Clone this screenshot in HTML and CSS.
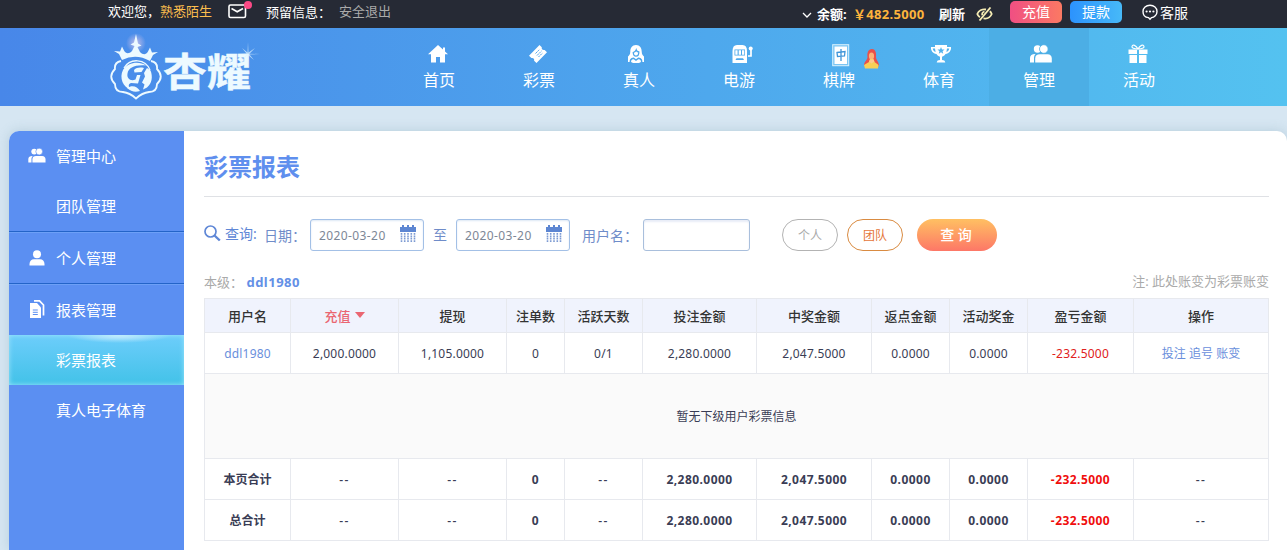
FILE: index.html
```html
<!DOCTYPE html>
<html lang="zh-CN">
<head>
  <meta charset="UTF-8">
  <title>彩票报表</title>
  <link rel="stylesheet" href="styles.css">
</head>
<body>
  <!-- 顶部信息栏 -->
  <div class="topbar">
    <div class="top-left">
      <span>欢迎您，</span><span class="user-name">熟悉陌生</span>
      <a class="mail">
        <svg width="19" height="16" viewBox="0 0 19 16" fill="none" stroke="#fff" stroke-width="1.6"><rect x="1" y="2" width="16.5" height="12.5" rx="1.5"/><path d="M3.500 5.500l5.700 3.300L15 5.500"/></svg>
        <i class="dot"></i>
      </a>
      <span class="keep-info">预留信息<i class="colon">：</i></span>
      <a class="logout">安全退出</a>
    </div>
    <div class="top-right">
      <svg class="chevron" width="10" height="8" viewBox="0 0 10 8" fill="none" stroke="#fff" stroke-width="1.3"><path d="M1 2l4 4 4-4"/></svg>
      <b class="balance-label">余额:</b>
      <b class="balance">￥482.5000</b>
      <b class="refresh">刷新</b>
      <svg class="eye" width="17" height="14" viewBox="0 0 17 14" fill="none" stroke="#f5ecb4" stroke-width="1.8"><path d="M10 2.500C6 1.800 2.500 4 1.300 7c.5 1.400 1.400 2.500 2.600 3.300M7.500 11.400c4 .6 7-1.400 8.200-4.400-.4-1.100-1-2-1.900-2.700"/><path d="M14.500.5L3.500 13.500"/><path d="M8.500 4.500c-2 .5-2.700 2-2.200 3.700"/></svg>
      <a class="btn-top recharge">充值</a>
      <a class="btn-top withdraw">提款</a>
      <a class="service">
        <svg width="16" height="17" viewBox="0 0 16 17"><path d="M8 1.200c4 0 7 2.600 7 6.200s-2.800 6-5.500 6.200L8 15.300l-1.500-1.700C3.500 13.300 1 11 1 7.400S4 1.200 8 1.200z" fill="none" stroke="#fff" stroke-width="1.400"/><circle cx="4.600" cy="7.500" r="1.100" fill="#fff"/><circle cx="8" cy="7.500" r="1.100" fill="#fff"/><circle cx="11.400" cy="7.500" r="1.100" fill="#fff"/></svg>
        <span>客服</span>
      </a>
    </div>
  </div>

  <!-- 导航 -->
  <div class="header">
    <div class="logo">
      <svg class="emblem" width="54" height="70" viewBox="0 0 54 70">
        <defs><radialGradient id="glow"><stop offset="0" stop-color="#f3cfe8" stop-opacity=".7"/><stop offset="1" stop-color="#f3cfe8" stop-opacity="0"/></radialGradient></defs>
        <circle cx="27" cy="10" r="10" fill="url(#glow)"/>
        <path d="M13 27l-3-6-5-3 6 .5 2-5 2 4c2 3.500 5 3.500 8 .5l2.500-5-4-1.500 3.500-2L27 1l2 9.500 3.500 2-4 1.500 2.500 5c3 3 6 3 8-.5l2-4 2 5 6-.5-5 3-3 6Q27 20 13 27z" fill="#edfaff"/>
        <path d="M12 28c-5 1-6.500 4-6 8-5 5-5 10 0 15 0 5 3 8 8 8 4 .5 8 2 13 6.500C32 61 36 59.500 40 59c5 0 8-3 8-8 5-5 5-10 0-15 .5-4-1-7-6-8" fill="none" stroke="#edfaff" stroke-width="1.800"/>
        <path d="M41 37A14.500 14.500 0 0 0 15 35" fill="none" stroke="#edfaff" stroke-width="1.400"/>
        <path d="M37 32.500C31 28 19 28.500 14 37c-4 8 0 17 8 20-3-3.500-3-6 0-7l7 .5 2.500-8.500-3.500 0-1.500 4.500c-5 2-9-1-8-6C19.500 34.500 26 31.500 37 32.500z" fill="#edfaff"/>
        <path d="M25 37c2.500-2.500 6-3 10-2l-2.500 4-7 .5z" fill="#edfaff"/>
        <path d="M38 35l3.500 2.500c2.500 6 1.500 13-3.500 17l-4 2 1.500-5-2.500-2 3-6-1-3.500z" fill="#edfaff"/>
        <path d="M18 55c5-3 10-2 13 3-5 1.500-9 .5-13-3z" fill="#edfaff"/>
      </svg>
      <span class="logo-text">杏耀</span>
      <svg class="spark" width="24" height="24" viewBox="0 0 24 24"><path d="M12 0l.5 10.500L19 6l-5.500 5.700L24 12l-10.500.5L18 18l-5.500-4.500L12 24l-.6-10.500L6 18l4.500-5.500L0 12l10.500-.6L6 6l5.500 4.500z" fill="#dff3ff" opacity=".7"/></svg>
    </div>
    <div class="nav">
      <a class="nav-item">
        <svg width="20" height="20" viewBox="0 0 20 20"><path d="M10 1L0 10.300h3V18.500h5v-5.500h4v5.500h5v-8.200h3l-3-2.800V3.500h-2v2z" fill="#fff"/></svg>
        <span>首页</span>
      </a>
      <a class="nav-item">
        <svg width="20" height="20" viewBox="0 0 20 20"><path d="M11.500 1l2.300 2.300c-.5 1.500.8 3.200 2.800 2.700l2.400 2.200L8.500 19l-2.400-2.300c.5-1.800-.8-3-2.700-2.600L1 11.800z" fill="#fff"/><path d="M7.500 9.500l4-4M9 11.500l4.500-4.500M10.500 13l4-4" stroke="#4ba0ea" stroke-width="1" stroke-dasharray="2 .7"/></svg>
        <span>彩票</span>
      </a>
      <a class="nav-item girl">
        <svg width="20" height="20" viewBox="0 0 20 20"><path d="M10 1c-4 0-5.700 3-5.700 6.500 0 3-1.300 4-2.300 5v5.500h3l2 1h6l2-1h3v-5.500c-1-1-2.300-2-2.300-5C15.700 4 14 1 10 1z" fill="#fff"/><path d="M7.300 8.500c0 2.500 1.200 3.700 2.700 3.700s2.800-1.500 2.800-4.200c-1.800-.3-2.300-1-2.600-2-.5 1.200-1.500 2-2.900 2.500z" fill="#fff" stroke="#4ba6eb" stroke-width="1.300"/><path d="M4.500 18.500c-.7-2 .5-4 3-4.300L10 16l2.500-1.800c2.500.3 3.700 2.300 3 4.300" fill="none" stroke="#4ba6eb" stroke-width="1.500"/></svg>
        <span>真人</span>
      </a>
      <a class="nav-item slot">
        <svg width="22" height="20" viewBox="0 0 22 20"><path d="M1.500 7C1.500 3 3 1 6 1h5.500c3 0 4.500 2 4.500 6v12H1.500z" fill="#fff"/><rect x="3.500" y="5.500" width="10.500" height="6" fill="#4ca9ec"/><path d="M4.300 6.300h2.300v4.400H4.300zM7.700 6.300H10v4.400H7.700zM11 6.300h2.300v4.400H11z" fill="#fff"/><path d="M4.500 16l1-1.800h6.500l1 1.800z" fill="#4ca9ec"/><path d="M17 12h3V5" fill="none" stroke="#fff" stroke-width="1.700"/><circle cx="19.700" cy="4.500" r="2" fill="#fff"/></svg>
        <span>电游</span>
      </a>
      <a class="nav-item chess">
        <svg width="18" height="23" viewBox="0 0 18 23"><rect x=".7" y=".7" width="16" height="21" fill="#7bc5f3" stroke="#d9f2fd" stroke-width="1"/><rect x="2.500" y="2.500" width="12.500" height="17.500" fill="#fff"/><path d="M5 8.500l8-1-.5 4.500-7 .5zM9 5v12" fill="none" stroke="#3f95d8" stroke-width="1.300"/></svg>
        <span>棋牌</span>
        <svg class="lady" width="17" height="20" viewBox="0 0 17 20"><path d="M9 0C5 0 4 4 4.500 8c0 3-3 4-3.500 8l2 2h12l1-2c-.5-4-3-5-3-8 .5-5-1-8-4-8z" fill="#ea5049"/><ellipse cx="8.500" cy="7" rx="2.600" ry="3.500" fill="#fdb277"/><path d="M7 10h3.500l1 3 4 3-.5 3.500H2L1 16l5-3z" fill="#f8cf55"/><path d="M6 12.500l2.500 2 3-2-1-2H7z" fill="#ffc98c"/></svg>
      </a>
      <a class="nav-item cup">
        <svg width="22" height="20" viewBox="0 0 22 20"><path d="M5 1h12v2h4c.5 3.500-2 6.500-5.500 7-.8 1.500-2 2.300-3.500 2.700V16c2 0 3 .8 3.300 2.500H6.700C7 16.800 8 16 10 16v-3.300C8.500 12.300 7.300 11.500 6.500 10 3 9.500.5 6.500 1 3h4z" fill="#fff"/><path d="M2.700 4.500H5l.6 3.500C4 7.500 3 6.300 2.700 4.500zM19.300 4.500H17l-.6 3.500c1.600-.5 2.600-1.700 2.900-3.500z" fill="#51b2ed"/><path d="M11 3l1 2.400 2.500.2-1.900 1.600.6 2.500L11 8.300 8.800 9.700l.6-2.500-1.900-1.600 2.500-.2z" fill="#51b2ed"/></svg>
        <span>体育</span>
      </a>
      <a class="nav-item active">
        <svg width="22" height="20" viewBox="0 0 22 20" fill="#fff"><circle cx="7.500" cy="5" r="3.700"/><path d="M0 18.500V14c0-2.500 2-4 5-4h.6C4.500 11 4 12.500 4 14v4.500z"/><circle cx="13.800" cy="5" r="4.300" stroke="#4caee5" stroke-width=".8"/><path d="M5.200 18.500V14.500c0-3 1.800-4.300 4.500-4.300h7.800c2.800 0 4.300 1.800 4.300 4.300v4z"/></svg>
        <span>管理</span>
      </a>
      <a class="nav-item">
        <svg width="20" height="20" viewBox="0 0 20 20"><path d="M.5 5.500H9v4.500H.5zM11 5.500h8.500V10H11zM1.500 11H9v8H1.500zM11 11h7.500v8H11z" fill="#fff"/><path d="M10 5C8 1 4.500 0 4 2.500 3.800 4 6 5 10 5c4 0 6.200-1 6-2.500C15.500 0 12 1 10 5z" fill="none" stroke="#fff" stroke-width="1.200"/></svg>
        <span>活动</span>
      </a>
    </div>
  </div>

  <div class="main">
    <!-- 左侧菜单 -->
    <div class="sidebar">
      <a class="menu-title">
        <svg width="18" height="15" viewBox="0 0 22 19" fill="#fff"><circle cx="7.500" cy="4.500" r="3.700"/><path d="M0 18.500V14c0-2.500 2-4 5-4h.6C4.500 11 4 12.500 4 14v4.500z"/><circle cx="13.800" cy="4.500" r="4.300" stroke="#5b8ff2" stroke-width=".8"/><path d="M5.200 18.500V14.500c0-3 1.800-4.300 4.500-4.300h7.800c2.800 0 4.300 1.800 4.300 4.300v4z"/></svg>
        管理中心
      </a>
      <a class="menu-sub">团队管理</a>
      <a class="menu-title line">
        <svg width="16" height="16" viewBox="0 0 16 16" fill="#fff"><circle cx="8" cy="4.200" r="4"/><path d="M.5 15.500V14c0-3 2-4.700 4.500-4.700h6c2.500 0 4.500 1.700 4.500 4.700v1.500z"/></svg>
        个人管理
      </a>
      <a class="menu-title line">
        <svg width="16" height="19" viewBox="0 0 16 19"><path d="M5 .8h5.500L14.500 5v10.500" fill="none" stroke="#fff" stroke-width="1.700"/><path d="M1 3h7l4 4.500V18H1z" fill="#fff"/><path d="M3.800 10h5M3.800 12.300h5M3.800 14.500h5" stroke="#5b8ff2" stroke-width="1"/></svg>
        报表管理
      </a>
      <a class="menu-sub current">彩票报表</a>
      <a class="menu-sub">真人电子体育</a>
    </div>

    <div class="content">
      <h1>彩票报表</h1>
      <div class="search">
        <svg class="glass" width="17" height="17" viewBox="0 0 17 17" fill="none" stroke="#5f87d6"><circle cx="6.500" cy="6.500" r="5.500" stroke-width="1.700"/><path d="M10.500 10.500l5.300 5" stroke-width="2.400"/></svg>
        <span class="search-label">查询:</span>
        <span class="date-label">日期<i class="colon">：</i></span>
        <div class="date-box">2020-03-20
          <svg width="16" height="18" viewBox="0 0 16 18"><path d="M0 2h2V0h2v2h3V0h2v2h3V0h2v2h2v5H0z" fill="#5d86d2"/><path d="M1.500 8v9M4.700 8v9M8 8v9M11.300 8v9M14.500 8v9" stroke="#7d9bd3" stroke-width="1.600" stroke-dasharray="1.800 .6"/></svg>
        </div>
        <span class="to">至</span>
        <div class="date-box">2020-03-20
          <svg width="16" height="18" viewBox="0 0 16 18"><path d="M0 2h2V0h2v2h3V0h2v2h3V0h2v2h2v5H0z" fill="#5d86d2"/><path d="M1.500 8v9M4.700 8v9M8 8v9M11.300 8v9M14.500 8v9" stroke="#7d9bd3" stroke-width="1.600" stroke-dasharray="1.800 .6"/></svg>
        </div>
        <span class="name-label">用户名<i class="colon">：</i></span>
        <input class="name-input" type="text">
        <a class="pill">个人</a>
        <a class="pill on">团队</a>
        <a class="query">查 询</a>
      </div>
      <div class="level">
        <span>本级<i class="colon">：</i> <b>ddl1980</b></span>
        <span>注: 此处账变为彩票账变</span>
      </div>
      <table class="report">
        <colgroup>
          <col class="w86"><col class="w108"><col class="w108"><col class="w58"><col class="w78"><col class="w114"><col class="w115"><col class="w78"><col class="w78"><col class="w106"><col class="w135">
        </colgroup>
        <tr class="head">
          <th>用户名</th><th class="sort">充值<i class="arrow"></i></th><th>提现</th><th>注单数</th><th>活跃天数</th><th>投注金额</th><th>中奖金额</th><th>返点金额</th><th>活动奖金</th><th>盈亏金额</th><th>操作</th>
        </tr>
        <tr>
          <td><a>ddl1980</a></td><td>2,000.0000</td><td>1,105.0000</td><td>0</td><td>0/1</td><td>2,280.0000</td><td>2,047.5000</td><td>0.0000</td><td>0.0000</td><td class="red">-232.5000</td><td class="links"><a>投注</a> <a>追号</a> <a>账变</a></td>
        </tr>
        <tr class="empty">
          <td colspan="11">暂无下级用户彩票信息</td>
        </tr>
        <tr class="total">
          <td>本页合计</td><td class="none">--</td><td class="none">--</td><td>0</td><td class="none">--</td><td>2,280.0000</td><td>2,047.5000</td><td>0.0000</td><td>0.0000</td><td class="red">-232.5000</td><td class="none">--</td>
        </tr>
        <tr class="total">
          <td>总合计</td><td class="none">--</td><td class="none">--</td><td>0</td><td class="none">--</td><td>2,280.0000</td><td>2,047.5000</td><td>0.0000</td><td>0.0000</td><td class="red">-232.5000</td><td class="none">--</td>
        </tr>
      </table>
    </div>
  </div>
</body>
</html>
```
FILE: styles.css
```css
* {
  box-sizing: border-box;
}
body {
  margin: 0;
  height: 550px;
  overflow: hidden;
  background: #d6e6f2;
  color: #333;
  font-family: "Noto Sans", "Noto Sans CJK SC", sans-serif;
  font-size: 13px;
}
svg {
  display: block;
  flex: none;
}
i {
  font-style: normal;
}
/* 冒号居中 */
.colon {
  font-family: "Noto Sans CJK TC", sans-serif;
}
/* 顶部 */
.topbar {
  display: flex;
  height: 28px;
  background: #262a35;
  color: #fff;
  white-space: nowrap;
}
.top-left {
  display: flex;
  width: 692px;
  padding-left: 108px;
  height: 23px;
  line-height: 23px;
}
.user-name {
  color: #fdbf4e;
}
.mail {
  position: relative;
  width: 19px;
  margin: 3px 19px 0 16px;
}
.dot {
  position: absolute;
  top: -2px;
  right: -5px;
  width: 8px;
  height: 8px;
  border-radius: 50%;
  background: #fb4a86;
}
.logout {
  margin-left: 8px;
  color: #aaa;
}
.top-right {
  display: flex;
  width: 485px;
  height: 28px;
  line-height: 28px;
  margin-left: 110px;
}
.chevron {
  margin: 11px 5px 0 0;
}
.balance-label {
  width: 36px;
}
.balance {
  width: 86px;
  letter-spacing: .3px;
  color: #fdb43c;
}
.refresh {
  width: 37px;
}
.eye {
  margin: 7px 17px 0 0;
}
.btn-top {
  width: 52px;
  height: 22px;
  line-height: 22px;
  margin: 1px 8px 0 0;
  border-radius: 5px;
  text-align: center;
  font-size: 14px;
}
.recharge {
  background: linear-gradient(to right, #f04f83, #fb7963);
}
.withdraw {
  background: linear-gradient(to right, #2c93fd, #47b9f8);
}
.service {
  display: flex;
  gap: 2px;
  margin-left: 12px;
  line-height: 25px;
  font-size: 14px;
}
.service svg {
  margin-top: 4px;
}
/* 导航 */
.header {
  display: flex;
  height: 78px;
  background: linear-gradient(to right, #4887e9, #4ea8ed 55%, #54c2f0);
}
.logo {
  position: relative;
  display: flex;
  width: 389px;
  padding: 5px 0 0 109px;
}
.logo-text {
  margin: 13px 0 0 0;
  height: 50px;
  line-height: 50px;
  font-size: 44px;
  font-weight: 700;
  color: #edfaff;
  -webkit-text-stroke: .5px #edfaff;
  transform: scaleY(.88);
}
.spark {
  position: absolute;
  left: 236px;
  top: 14px;
}
.nav {
  display: flex;
}
.nav-item {
  position: relative;
  display: flex;
  flex-direction: column;
  align-items: center;
  width: 100px;
  height: 78px;
  padding-top: 16px;
  color: #fff;
  font-size: 16px;
}
.nav-item span {
  margin-top: 4px;
  line-height: 24px;
}
.nav-item svg {
  height: 20px;
  margin-left: -2px;
}
.nav-item.girl svg {
  margin-left: -6px;
}
.nav-item.slot svg {
  margin-left: 5px;
}
.nav-item.cup svg {
  margin-left: 4px;
}
.nav-item.chess svg {
  height: 23px;
  margin-left: 3px;
}
.nav-item.chess span {
  margin-top: 1px;
}
.nav-item.chess .lady {
  position: absolute;
  left: 71px;
  top: 21px;
  height: 20px;
}
.nav-item.active {
  background: #4caee5;
}
.nav-item.active svg {
  margin-left: 3px;
}
/* 主体 */
.main {
  display: flex;
  height: 419px;
  margin: 25px 0 0 9px;
  border-radius: 10px 10px 0 0;
  background: #fff;
  overflow: hidden;
  box-shadow: 0 0 12px rgba(110, 150, 170, .3);
}
.sidebar {
  width: 175px;
  background: #5b8ff2;
}
.menu-title,
.menu-sub {
  display: flex;
  align-items: center;
  height: 50px;
  padding: 0 0 2px 47px;
  color: #fff;
  font-size: 15px;
}
.menu-title {
  padding-left: 19px;
}
.menu-title svg {
  width: 18px;
  margin-right: 10px;
}
.menu-title.line {
  height: 52px;
  padding-bottom: 0;
  border-top: 1px solid #2464c8;
  box-shadow: inset 0 1px #6da0f7;
}
.menu-sub.current {
  background: radial-gradient(ellipse 52px 8px at 63% 0, #d9f2ff, rgba(217, 242, 255, 0)), linear-gradient(#6dcdfb, #42c2e8);
  box-shadow: inset 0 0 5px #9fe6fb;
}
.content {
  width: 1085px;
  padding: 0 0 0 20px;
}
h1 {
  height: 66px;
  margin: 0 0 22px;
  border-bottom: 1px solid #dfe1e5;
  line-height: 72px;
  font-size: 24px;
  color: #5f8fee;
}
.search {
  display: flex;
  height: 32px;
  line-height: 32px;
  font-size: 14px;
  color: #6f8cc9;
  white-space: nowrap;
}
.glass {
  margin: 6px 4px 0 0;
}
.search-label {
  width: 39px;
  line-height: 30px;
  color: #5f87d6;
}
.date-label {
  width: 46px;
}
.date-box {
  display: flex;
  justify-content: space-between;
  align-items: center;
  width: 114px;
  height: 32px;
  padding: 1px 7px 0 8px;
  border: 1px solid #a3c0e6;
  border-radius: 3px;
  box-shadow: inset 0 1px 2px #dde8f5;
  font-size: 12px;
  letter-spacing: .4px;
  color: #7d8796;
}
.date-box svg {
  margin-top: -3px;
}
.to {
  width: 32px;
  text-align: center;
}
.name-label {
  width: 61px;
  margin-left: 12px;
}
.name-input {
  width: 107px;
  height: 32px;
  margin-right: 32px;
  border: 1px solid #a9bfdc;
  border-radius: 3px;
  box-shadow: inset 0 2px 2px #e8edf7;
  outline: none;
}
.pill {
  width: 56px;
  height: 32px;
  margin-right: 9px;
  border: 1px solid #b3b3b3;
  border-radius: 16px;
  text-align: center;
  line-height: 32px;
  font-size: 12px;
  color: #aaa;
}
.pill.on {
  margin-right: 14px;
  border-color: #d98b41;
  color: #e5763a;
}
.query {
  width: 80px;
  height: 32px;
  padding-right: 2px;
  border-radius: 16px;
  background: linear-gradient(#ffc062, #fd7767);
  color: #fff;
  text-align: center;
  font-weight: 500;
}
.level {
  display: flex;
  justify-content: space-between;
  height: 47px;
  padding-top: 15px;
  line-height: 31px;
  color: #aaa;
}
.level b {
  letter-spacing: .5px;
  color: #6490e6;
}
/* 报表 */
.report {
  width: 1065px;
  table-layout: fixed;
  border-collapse: collapse;
  font-size: 12px;
  text-align: center;
  color: #3a3d55;
}
.report th,
.report td {
  height: 41px;
  padding: 2px 0 0;
  border: 1px solid #e7e9ee;
  line-height: 18px;
  letter-spacing: .2px;
}
.report .head th {
  height: 34px;
  padding: 0;
  background: #f0f3fd;
  font-size: 13px;
  font-weight: 500;
  letter-spacing: 0;
  color: #333;
}
.report .head .sort {
  color: #ea6672;
}
.arrow {
  display: inline-block;
  margin: 0 0 3px 4px;
  border: 5px solid transparent;
  border-top: 6px solid #ea6672;
  border-bottom: 0;
}
.report a {
  color: #6a8fdc;
}
.report .red {
  color: #e02020;
}
.report .empty td {
  height: 85px;
  background: #fafafa;
  letter-spacing: 0;
}
.report .links {
  letter-spacing: 0;
}
.report .total td {
  font-weight: bold;
  letter-spacing: .45px;
}
.report .total td:first-child {
  letter-spacing: 0;
}
.report .total .none {
  font-weight: 500;
  letter-spacing: 1.5px;
}
.report .total .red {
  color: #f00d0d;
}
.w58 { width: 58px; }
.w78 { width: 78px; }
.w86 { width: 86px; }
.w106 { width: 106px; }
.w108 { width: 108px; }
.w114 { width: 114px; }
.w115 { width: 115px; }
.w135 { width: 135px; }
```
